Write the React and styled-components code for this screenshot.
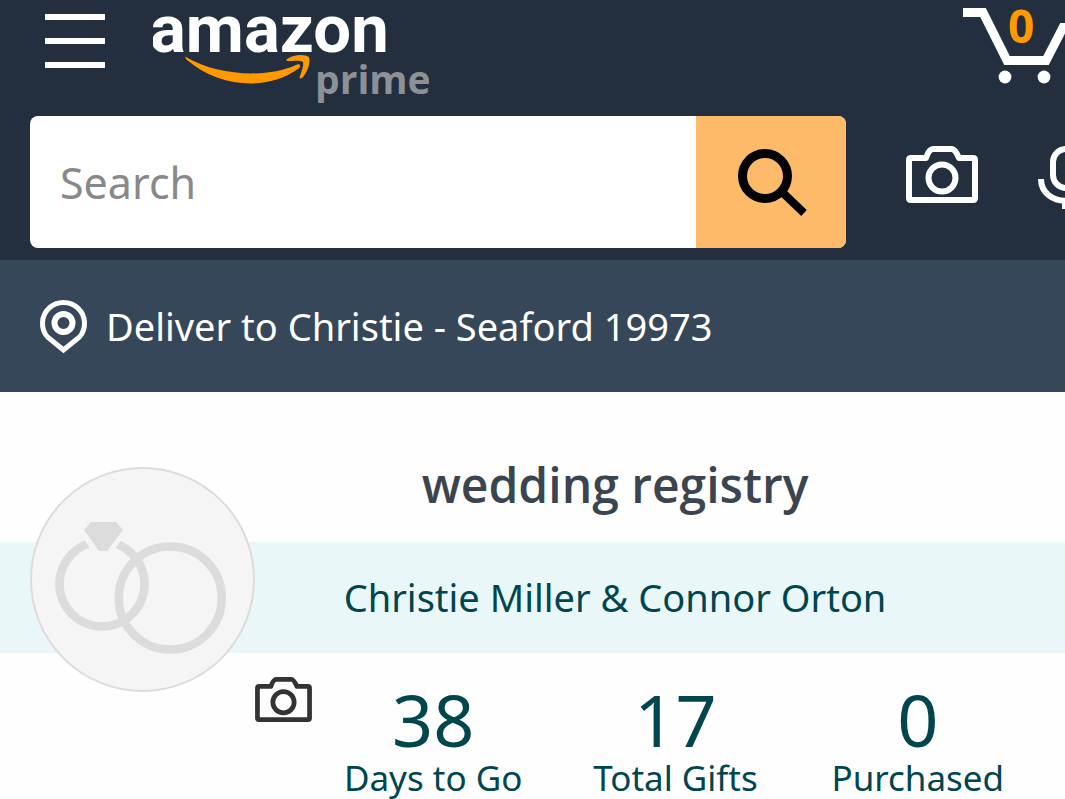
import React from "react";
import styled, { createGlobalStyle } from "styled-components";

const GlobalStyle = createGlobalStyle`
  * {
    box-sizing: border-box;
  }

  body {
    margin: 0;
    background: #fefefe;
    color: #00464f;
    font-family: "Noto Sans", "Open Sans", sans-serif;
  }
`;

const Header = styled.header`
  padding: 0 0 12px 30px;
  background: #232f3e;
`;

const TopRow = styled.div`
  display: flex;
  align-items: flex-start;
  height: 116px;
`;

const IconButton = styled.button`
  flex: none;
  display: block;
  width: ${props => props.$width}px;
  padding: 0;
  border: 0;
  background: none;
  color: ${props => props.$color || "#fff"};
  overflow: hidden;
  cursor: pointer;

  svg {
    display: block;
  }
`;

const MenuButton = styled(IconButton)`
  margin: 14px 48px 0 15px;
`;

const LogoLink = styled.a`
  display: block;
  height: 108px;

  svg {
    display: block;
  }
`;

const CartLink = styled.a`
  position: relative;
  width: 102px;
  margin-left: auto;
  overflow: hidden;

  svg {
    display: block;
  }
`;

const CartCount = styled.span`
  position: absolute;
  top: 3px;
  left: 45px;
  color: #ff9900;
  font-family: "Open Sans", sans-serif;
  font-size: 46px;
  font-weight: 700;
  line-height: 44px;
`;

const SearchRow = styled.div`
  display: flex;
  align-items: flex-start;
  gap: 60px;
`;

const SearchForm = styled.form`
  flex: 1;
  display: flex;
  min-width: 0;
  height: 132px;
  border-radius: 8px;
  background: #fff;
  overflow: hidden;
`;

const SearchInput = styled.input`
  flex: 1;
  min-width: 0;
  padding: 0 30px;
  border: 0;
  outline: 0;
  background: none;
  color: #111;
  font-family: inherit;
  font-size: 43px;

  &::placeholder {
    color: #888;
    opacity: 1;
  }
`;

const SearchButton = styled.button`
  flex: none;
  display: flex;
  align-items: center;
  justify-content: center;
  width: 150px;
  padding: 0;
  border: 0;
  background: #fdbb6a;
  color: #000;
  cursor: pointer;
`;

const SearchOption = styled(IconButton)`
  margin-top: 30px;
`;

const DeliverBar = styled.a`
  display: flex;
  align-items: center;
  gap: 18px;
  height: 132px;
  padding: 0 39px;
  background: #37475a;
  color: #fff;
  font-size: 38px;
  text-decoration: none;
  white-space: nowrap;
`;

const Registry = styled.main`
  position: relative;
`;

const Title = styled.h1`
  margin: 0;
  padding: 59px 0 23px 165px;
  color: #3a4550;
  font-family: "Open Sans", sans-serif;
  font-size: 48px;
  font-weight: 600;
  line-height: 68px;
  text-align: center;
`;

const NamesBand = styled.h2`
  margin: 0;
  padding-left: 165px;
  background: #e9f7f9;
  font-size: 38px;
  font-weight: 400;
  line-height: 111px;
  text-align: center;
`;

/* sits over the title area and the coloured band */
const Avatar = styled.div`
  position: absolute;
  top: 75px;
  left: 30px;
  width: 225px;
  height: 225px;
  border: 2px solid #dcdcdc;
  border-radius: 50%;
  background: #f5f5f5;
`;

const StatsRow = styled.section`
  display: flex;
  align-items: flex-start;
  padding: 24px 26px 0 255px;
`;

const Stats = styled.dl`
  flex: 1;
  display: grid;
  grid-template-columns: repeat(3, 1fr);
  margin: 0;
  padding-top: 4px;
`;

const Stat = styled.div`
  display: flex;
  flex-direction: column-reverse;
  text-align: center;
  white-space: nowrap;
`;

const StatValue = styled.dd`
  margin: 0;
  font-size: 72px;
  line-height: 76px;
`;

const StatLabel = styled.dt`
  font-size: 35px;
  line-height: 42px;
`;

const stats = [
  { value: 38, label: "Days to Go" },
  { value: 17, label: "Total Gifts" },
  { value: 0, label: "Purchased" }
];

const MenuIcon = () => (
  <svg width="60" height="55" viewBox="0 0 60 55" fill="currentColor">
    <rect width="60" height="6" />
    <rect y="24" width="60" height="6" />
    <rect y="48" width="60" height="6" />
  </svg>
);

const Logo = () => (
  <svg width="280" height="108" viewBox="0 0 280 108">
    <text
      x="-3"
      y="52"
      fill="#fff"
      fontFamily="'Liberation Sans Narrow', Roboto, sans-serif"
      fontSize="67"
      fontWeight="700"
    >
      amazon
    </text>
    <path
      d="M33 57 C63 75 112 79 143 65 C147 63 149 66 145 69 C116 90 68 89 34 60 C32 58 32 56 33 57Z"
      fill="#ff9900"
    />
    <path
      d="M134 59 C141 54 152 54 156 57 C158 63 154 73 149 78 C147 79 146 78 147 76 C149 71 151 64 150 62 C148 60 140 61 136 61 C133 61 133 60 134 59Z"
      fill="#ff9900"
    />
    <text
      x="162"
      y="94"
      fill="#8d9094"
      fontFamily="'Open Sans', sans-serif"
      fontSize="39"
      fontWeight="700"
    >
      prime
    </text>
  </svg>
);

const CartIcon = () => (
  <svg width="112" height="90" viewBox="0 0 112 90" fill="none">
    <path d="M0 12.5 H20 L44 60.5 H83 L100 27.5 H112" stroke="#fff" strokeWidth="9" />
    <circle cx="42" cy="77" r="6.4" fill="#fff" />
    <circle cx="81" cy="77" r="6.4" fill="#fff" />
  </svg>
);

const SearchIcon = () => (
  <svg width="72" height="72" viewBox="0 0 72 72" fill="none" stroke="currentColor">
    <circle cx="30" cy="30" r="22.5" strokeWidth="9" />
    <path d="M46 45 L69 67" strokeWidth="8" />
  </svg>
);

const CameraIcon = ({ width = 72, height = 57 }) => (
  <svg
    width={width}
    height={height}
    viewBox="0 0 72 57"
    fill="none"
    stroke="currentColor"
    strokeWidth="6"
    strokeLinejoin="round"
  >
    <path d="M5 12 H20 Q23 3 27 3 H46 Q49 3 53 12 H67 Q69 12 69 14 V52 Q69 54 67 54 H5 Q3 54 3 52 V14 Q3 12 5 12Z" />
    <circle cx="36" cy="32" r="13.5" />
  </svg>
);

const MicIcon = () => (
  <svg width="56" height="68" viewBox="0 4 56 68" fill="none" stroke="currentColor" strokeWidth="6">
    <rect x="15" y="7" width="26" height="39" rx="13" />
    <path d="M3 37 C3 66 53 66 53 37 M27 60 V67" />
  </svg>
);

const PinIcon = () => (
  <svg width="49" height="56" viewBox="0 0 49 56" fill="none" stroke="currentColor">
    <path d="M24.5 52 L8.5 39 A21 21 0 1 1 40.5 39 Z" strokeWidth="5" />
    <circle cx="24.5" cy="25" r="9" strokeWidth="6" />
  </svg>
);

const RingsIcon = () => (
  <svg width="221" height="221" viewBox="32 469 221 221" fill="none">
    <g stroke="#dcdcdc" strokeWidth="8.5">
      <circle cx="102" cy="584" r="42.5" />
      <circle cx="170.3" cy="598" r="51.5" />
    </g>
    <path d="M83 532 H123 L108 554 H97Z" fill="#f5f5f5" stroke="#f5f5f5" strokeWidth="6" />
    <path d="M91 522 H116 L123 530 L107 551 H99 L84 530Z" fill="#dcdcdc" />
  </svg>
);

const App = () => {
  return (
    <>
      <GlobalStyle />
      <Header>
        <TopRow>
          <MenuButton $width={60} type="button" aria-label="Menu">
            <MenuIcon />
          </MenuButton>
          <LogoLink href="#home" aria-label="amazon prime">
            <Logo />
          </LogoLink>
          <CartLink href="#cart" aria-label="Cart">
            <CartIcon />
            <CartCount>0</CartCount>
          </CartLink>
        </TopRow>
        <SearchRow>
          <SearchForm role="search" onSubmit={e => e.preventDefault()}>
            <SearchInput type="text" placeholder="Search" aria-label="Search" />
            <SearchButton type="submit" aria-label="Go">
              <SearchIcon />
            </SearchButton>
          </SearchForm>
          <SearchOption $width={72} type="button" aria-label="Search by photo">
            <CameraIcon />
          </SearchOption>
          <SearchOption $width={27} type="button" aria-label="Search by voice">
            <MicIcon />
          </SearchOption>
        </SearchRow>
      </Header>
      <DeliverBar href="#address">
        <PinIcon />
        <span>Deliver to Christie - Seaford 19973</span>
      </DeliverBar>
      <Registry>
        <Title>wedding registry</Title>
        <NamesBand>Christie Miller &amp; Connor Orton</NamesBand>
        <Avatar>
          <RingsIcon />
        </Avatar>
        <StatsRow>
          <IconButton $width={57} $color="#333" type="button" aria-label="Change photo">
            <CameraIcon width={57} height={45} />
          </IconButton>
          <Stats>
            {stats.map(stat => (
              <Stat key={stat.label}>
                <StatLabel>{stat.label}</StatLabel>
                <StatValue>{stat.value}</StatValue>
              </Stat>
            ))}
          </Stats>
        </StatsRow>
      </Registry>
    </>
  );
};

export default App;
